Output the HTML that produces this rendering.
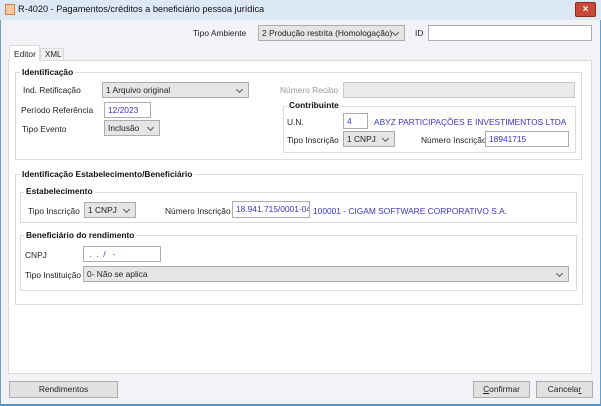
<!DOCTYPE html>
<html><head><meta charset="utf-8"><style>
*{box-sizing:border-box;margin:0;padding:0}
body{width:601px;height:406px;overflow:hidden;background:#f0f0f0;font-family:"Liberation Sans",sans-serif;font-size:8.4px;color:#222;position:relative}
.a{position:absolute;white-space:nowrap}
.win{position:absolute;left:0;top:0;width:601px;height:406px;border:1px solid #6a9ccc;border-bottom:2px solid #4f93c8;background:#f2f3f6}
.title{position:absolute;left:0;top:0;width:601px;height:20px;background:#dde8f5}
.inp{position:absolute;background:#fff;border:1px solid #abadb3;height:16px;color:#3a35c8;padding:0 3px;line-height:14px;white-space:nowrap;overflow:hidden}
.sel{position:absolute;background:#e5e5e5;border:1px solid #acacac;height:16px;padding:0 3px;line-height:14px;white-space:nowrap;overflow:hidden}
.sel:after{content:"";position:absolute;right:6px;top:4px;width:4px;height:4px;border-right:1px solid #555;border-bottom:1px solid #555;transform:rotate(45deg)}
.grp{position:absolute;border:1px solid #dcdcdc}
.gt{position:absolute;background:#fff;font-weight:bold;padding:0 2px;line-height:11px;color:#111;white-space:nowrap}
.btn{position:absolute;background:#e1e1e1;border:1px solid #adadad;height:17px;text-align:center;line-height:15px}
.blue{color:#3a35c8}
</style></head><body>
<div class="win"></div>
<div class="title"></div>
<div class="a" style="left:5px;top:4px;width:10px;height:11px;background:#f6c9a0;border:1px solid #e07a3a"></div>
<div class="a" style="left:18px;top:4px;font-size:9.2px;color:#111">R-4020 - Pagamentos/créditos a beneficiário pessoa jurídica</div>
<div class="a" style="left:575px;top:2px;width:21px;height:15px;background:#c9483a;border:1px solid #8f2a20;border-radius:2px;color:#fff;font-size:10px;text-align:center;line-height:13px;font-weight:bold">×</div>

<div class="a" style="left:193px;top:28px">Tipo Ambiente</div>
<div class="sel" style="left:258px;top:25px;width:147px">2 Produção restrita (Homologação)</div>
<div class="a" style="left:415px;top:28px">ID</div>
<div class="inp" style="left:428px;top:25px;width:164px"></div>

<div class="a" style="left:8px;top:60px;width:584px;height:314px;background:#fff;border:1px solid #dadada"></div>
<div class="a" style="left:9px;top:45px;width:31px;height:16px;background:#fff;border:1px solid #dadada;border-bottom:none;padding:3px 0 0 4px">Editor</div>
<div class="a" style="left:40px;top:48px;width:24px;height:12px;background:#f0f0f0;border:1px solid #dadada;border-bottom:none;padding:1px 0 0 4px;font-size:8px">XML</div>

<div class="grp" style="left:15px;top:72px;width:567px;height:88px"></div>
<div class="gt" style="left:20px;top:67px">Identificação</div>
<div class="a" style="left:23px;top:85px">Ind. Retificação</div>
<div class="sel" style="left:102px;top:82px;width:147px">1 Arquivo original</div>
<div class="a" style="left:280px;top:85px;color:#999">Número Recibo</div>
<div class="a" style="left:343px;top:82px;width:232px;height:16px;background:#eaeaea;border:1px solid #c8c8c8"></div>
<div class="a" style="left:21px;top:105px">Período Referência</div>
<div class="inp" style="left:104px;top:102px;width:47px">12/2023</div>
<div class="a" style="left:22px;top:124px">Tipo Evento</div>
<div class="sel" style="left:104px;top:120px;width:56px">Inclusão</div>

<div class="grp" style="left:283px;top:106px;width:293px;height:47px"></div>
<div class="gt" style="left:287px;top:100px">Contribuinte</div>
<div class="a" style="left:287px;top:117px">U.N.</div>
<div class="inp" style="left:343px;top:113px;width:25px">4</div>
<div class="a blue" style="left:374px;top:117px">ABYZ PARTICIPAÇÕES E INVESTIMENTOS LTDA</div>
<div class="a" style="left:287px;top:135px">Tipo Inscrição</div>
<div class="sel" style="left:343px;top:131px;width:52px">1 CNPJ</div>
<div class="a" style="left:421px;top:135px">Número Inscrição</div>
<div class="inp" style="left:485px;top:131px;width:84px">18941715</div>

<div class="grp" style="left:15px;top:174px;width:568px;height:131px"></div>
<div class="gt" style="left:20px;top:169px">Identificação Estabelecimento/Beneficiário</div>
<div class="grp" style="left:20px;top:192px;width:557px;height:31px"></div>
<div class="gt" style="left:24px;top:186px">Estabelecimento</div>
<div class="a" style="left:28px;top:206px">Tipo Inscrição</div>
<div class="sel" style="left:84px;top:202px;width:52px">1 CNPJ</div>
<div class="a" style="left:165px;top:206px">Número Inscrição</div>
<div class="inp" style="left:232px;top:201px;width:78px;height:17px">18.941.715/0001-04</div>
<div class="a blue" style="left:313px;top:206px">100001 - CIGAM SOFTWARE CORPORATIVO S.A.</div>

<div class="grp" style="left:20px;top:235px;width:557px;height:56px"></div>
<div class="gt" style="left:24px;top:230px">Beneficiário do rendimento</div>
<div class="a" style="left:25px;top:250px">CNPJ</div>
<div class="inp" style="left:83px;top:246px;width:78px">&nbsp;.&nbsp;&nbsp;.&nbsp;&nbsp;/&nbsp;&nbsp;&nbsp;-</div>
<div class="a" style="left:25px;top:270px">Tipo Instituição</div>
<div class="sel" style="left:83px;top:266px;width:486px">0- Não se aplica</div>

<div class="btn" style="left:9px;top:381px;width:109px">Rendimentos</div>
<div class="btn" style="left:473px;top:381px;width:57px"><u>C</u>onfirmar</div>
<div class="btn" style="left:536px;top:381px;width:57px">Cancela<u>r</u></div>
</body></html>
